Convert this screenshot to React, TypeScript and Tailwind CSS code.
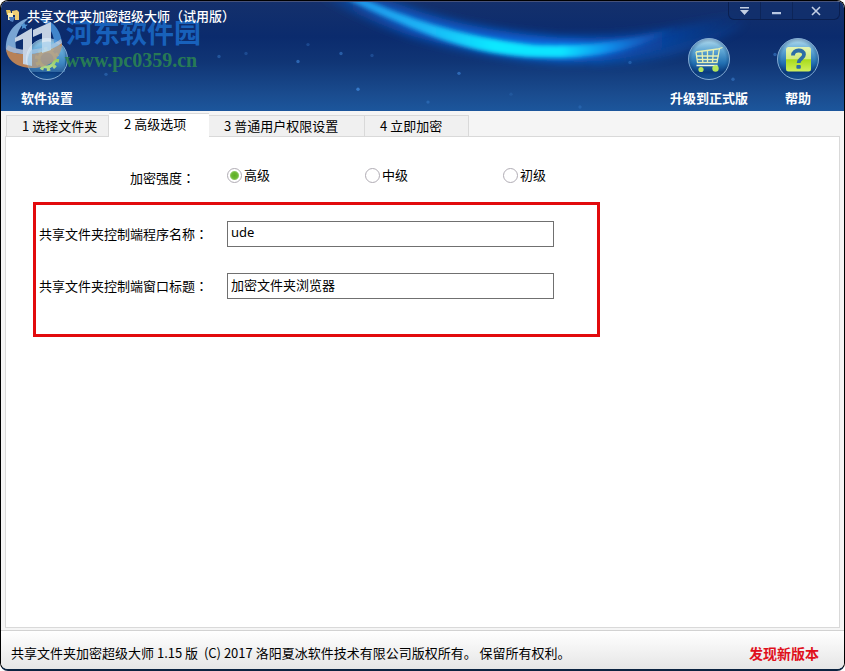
import { useState } from "react";
import type { ReactNode } from "react";

const tabs = [
  { label: "1 选择文件夹", width: "w-[103px]" },
  { label: "2 高级选项", width: "w-[100px]" },
  { label: "3 普通用户权限设置", width: "w-[156px]" },
  { label: "4 立即加密", width: "w-[104px]" },
];

const levels = ["高级", "中级", "初级"];

const stars = [
  [245, 52, 0.3],
  [297, 60, 0.6],
  [307, 43, 0.3],
  [340, 52, 0.5],
  [357, 88, 0.8],
  [371, 54, 0.3],
  [427, 101, 0.4],
  [458, 72, 0.6],
  [510, 93, 0.2],
  [579, 106, 0.3],
  [629, 61, 0.4],
  [732, 78, 0.5],
  [774, 53, 0.5],
  [105, 73, 0.4],
  [218, 55, 0.4],
];

function HeaderBackground() {
  return (
    <svg
      className="absolute inset-0 h-full w-full"
      viewBox="0 0 843 110"
      preserveAspectRatio="none"
      aria-hidden="true"
    >
      <defs>
        <linearGradient id="sky" x1="0" y1="0" x2="0" y2="1">
          <stop offset="0" stopColor="#14306c" />
          <stop offset="0.32" stopColor="#0b2b6d" />
          <stop offset="0.55" stopColor="#103575" />
          <stop offset="0.85" stopColor="#1a4c8f" />
          <stop offset="1" stopColor="#1c569c" />
        </linearGradient>
        <linearGradient id="beam" gradientUnits="userSpaceOnUse" x1="340" y1="0" x2="680" y2="0">
          <stop offset="0" stopColor="#1e8fe8" />
          <stop offset="0.25" stopColor="#1cb6f6" />
          <stop offset="0.45" stopColor="#0ce8ff" />
          <stop offset="0.65" stopColor="#0ce4ff" />
          <stop offset="0.78" stopColor="#129df4" stopOpacity="0.85" />
          <stop offset="0.9" stopColor="#1474dc" stopOpacity="0.35" />
          <stop offset="1" stopColor="#1560c8" stopOpacity="0" />
        </linearGradient>
        <linearGradient id="glow" gradientUnits="userSpaceOnUse" x1="290" y1="0" x2="750" y2="0">
          <stop offset="0" stopColor="#0d4eb0" stopOpacity="0.2" />
          <stop offset="0.25" stopColor="#0c5fd0" stopOpacity="0.8" />
          <stop offset="0.6" stopColor="#0a6be4" />
          <stop offset="0.75" stopColor="#0c56c4" stopOpacity="0.7" />
          <stop offset="1" stopColor="#0c56c4" stopOpacity="0" />
        </linearGradient>
        <filter id="soft" x="-20%" y="-60%" width="140%" height="220%">
          <feGaussianBlur stdDeviation="2.2" />
        </filter>
        <filter id="softer" x="-20%" y="-80%" width="140%" height="260%">
          <feGaussianBlur stdDeviation="5" />
        </filter>
      </defs>
      <rect width="843" height="110" fill="url(#sky)" />
      <path
        d="M320 -6 L376 -6 C440 20 490 30 560 36 C630 38 690 24 750 8 C700 40 640 58 590 60 C520 62 460 48 410 34 C380 24 350 10 320 -6Z"
        fill="url(#glow)"
        filter="url(#softer)"
      />
      <path
        d="M590 58 C650 56 690 38 745 20 C705 48 650 64 590 62Z"
        fill="#1168d8"
        opacity="0.35"
        filter="url(#softer)"
      />
      <path
        d="M340 -6 L364 -3 C410 18 460 34 530 43 C570 46 630 42 680 22 C650 46 600 56 560 56 C500 57 460 46 420 30 C390 18 360 5 340 -6Z"
        fill="url(#beam)"
        filter="url(#soft)"
      />
      {stars.map(([x, y, opacity]) => (
        <circle key={`${x}-${y}`} cx={x} cy={y} r="1.7" fill="#3f86d8" opacity={opacity} />
      ))}
    </svg>
  );
}

function Orb({ id, children }: { id: string; children: ReactNode }) {
  return (
    <svg className="h-11 w-11" viewBox="0 0 44 44" aria-hidden="true">
      <defs>
        <linearGradient id={`${id}-body`} x1="0" y1="0" x2="0" y2="1">
          <stop offset="0" stopColor="#b8dff0" />
          <stop offset="0.3" stopColor="#5fa6d4" />
          <stop offset="0.6" stopColor="#2270b2" />
          <stop offset="0.82" stopColor="#0a3b7e" />
          <stop offset="1" stopColor="#1c5da4" />
        </linearGradient>
        <radialGradient id={`${id}-shade`} cx="0.5" cy="0.5" r="0.5">
          <stop offset="0.8" stopColor="#06295f" stopOpacity="0" />
          <stop offset="1" stopColor="#06295f" stopOpacity="0.35" />
        </radialGradient>
        <linearGradient id={`${id}-lime`} x1="0" y1="0" x2="0" y2="1">
          <stop offset="0" stopColor="#e4f4b4" />
          <stop offset="0.48" stopColor="#d3ec7c" />
          <stop offset="0.52" stopColor="#a9db1c" />
          <stop offset="1" stopColor="#d0f05c" />
        </linearGradient>
      </defs>
      <circle cx="22" cy="22" r="20.5" fill={`url(#${id}-body)`} />
      <circle cx="22" cy="22" r="20.5" fill={`url(#${id}-shade)`} stroke="#83acd4" strokeWidth="1" />
      {children}
    </svg>
  );
}

function GearIcon() {
  return (
    <Orb id="gear">
      <g fill="none" stroke="url(#gear-lime)">
        <circle cx="22" cy="22" r="8" strokeWidth="3" />
        <circle cx="22" cy="22" r="10.6" strokeWidth="3" strokeDasharray="3.4 3.26" />
      </g>
    </Orb>
  );
}

function CartIcon() {
  return (
    <Orb id="cart">
      <g fill="none" stroke="#e6f0b4" strokeWidth="1.3">
        <path d="M9 15 L30.5 12 L35.5 10.5" />
        <path d="M9 15 L10.5 25.5 H30 L32.5 11.5" />
        <path d="M9.5 19 H31.5 M10 22.5 H31 M15 14 L15.8 25.5 M20.5 13.5 V25.5 M26.5 12.5 L25.5 25.5" />
        <path d="M9.5 28.5 H30.5" strokeWidth="1.6" stroke="#f3f6e2" />
      </g>
      <circle cx="14" cy="32.5" r="2.6" fill="#b4e65c" />
      <circle cx="28.5" cy="31.5" r="3.2" fill="#b4e65c" />
    </Orb>
  );
}

function HelpIcon() {
  return (
    <Orb id="help">
      <rect x="10" y="10" width="25" height="24.5" rx="2.5" fill="url(#help-lime)" />
      <path
        d="M17 18.5 C17 12 28 12 28 17.5 C28 21.5 22.8 21.5 22.6 26"
        fill="none"
        stroke="#2d6da6"
        strokeWidth="3.8"
      />
      <rect x="20.4" y="28" width="4.4" height="3.8" rx="1" fill="#2d6da6" />
    </Orb>
  );
}

function ToolbarButton({ icon, label }: { icon: ReactNode; label: string }) {
  return (
    <button type="button" className="flex flex-col items-center gap-[7px] text-white">
      {icon}
      <span className="text-[13px] leading-5 font-bold">{label}</span>
    </button>
  );
}

function FolderIcon() {
  return (
    <svg className="h-4 w-4" viewBox="0 0 16 16" aria-hidden="true">
      <path d="M1 2 H5 L6 4 V7 H2 Z" fill="#e9c65e" />
      <path d="M7 3 L12 2 L14 4 V12 H10 V7 H7 Z" fill="#efcf74" />
      <path d="M3 5 H8 V12 H3 Z" fill="#fbefb8" />
      <path d="M4 9 L10 9 L8 14 L5 13 Z" fill="#4f7fc0" />
    </svg>
  );
}

function Watermark() {
  return (
    <div className="pointer-events-none absolute top-3 left-1 flex" aria-hidden="true">
      <svg className="h-[58px] w-[60px]" viewBox="0 0 60 58">
        <g opacity="0.85">
          <path
            d="M24 4 C9 8 0 20 1 36 C2 39 4 42 7 43 L12 38 C8 27 12 14 24 4Z"
            fill="#8dbbe6"
          />
          <path d="M32 4 C46 4 55 14 57 28 C57 31 56 34 54 36 L49 32 C50 20 44 10 32 4Z" fill="#4b95dc" />
          <path
            d="M1 35 C11 43 38 42 57 29 C57 44 44 54 28 54 C13 54 2 47 1 35Z"
            fill="#d68f52"
          />
          <path d="M1 35 C11 43 38 42 57 29 L56 25 C40 37 15 39 3 31Z" fill="#bccce0" />
          <path d="M10 24 L27 14 V52 L18 50 V25 L10 28Z" fill="#e6eff8" />
          <path d="M28 16 L46 8 V36 L37 39 V19 L28 23Z" fill="#e6eff8" />
          <path d="M19 8 l1 2.5 2.8 .2 -2.1 1.8 .7 2.7 -2.4 -1.5 -2.4 1.5 .7 -2.7 -2.1 -1.8 2.8 -.2Z" fill="#5ca7e6" />
        </g>
        <circle cx="43" cy="48" r="20.5" fill="#6fb2e0" opacity="0.35" />
      </svg>
      <div className="flex flex-col whitespace-nowrap">
        <span className="pl-px font-['Noto_Sans_CJK_SC',sans-serif] text-[27px] leading-9 font-bold text-[#1a69c6]/90">
          河东软件园
        </span>
        <span className="font-['Liberation_Serif',serif] text-xl leading-5 font-bold text-[#2b8451]/90">
          www.pc0359.cn
        </span>
      </div>
    </div>
  );
}

function WindowControls() {
  return (
    <div className="mr-1 flex h-[18px] rounded-b-md border border-t-0 border-[#0a1f50] bg-[#12316d]/60">
      <button type="button" aria-label="菜单" className="grid w-8 place-items-center border-r border-[#0d2558]">
        <svg className="h-2 w-[11px]" viewBox="0 0 11 8" aria-hidden="true">
          <path d="M1 0 H10 V1.4 H1Z M1 3 H10 L5.5 8Z" fill="#c3cfe4" />
        </svg>
      </button>
      <button type="button" aria-label="最小化" className="grid w-8 place-items-center border-r border-[#0d2558]">
        <svg className="h-2 w-[11px]" viewBox="0 0 11 8" aria-hidden="true">
          <path d="M1 5 H10 V7.2 H1Z" fill="#b9c8e2" />
        </svg>
      </button>
      <button type="button" aria-label="关闭" className="grid w-[46px] place-items-center">
        <svg className="h-[10px] w-[10px]" viewBox="0 0 10 10" aria-hidden="true">
          <path d="M1 1 L9 9 M9 1 L1 9" stroke="#c3cfe4" strokeWidth="1.6" />
        </svg>
      </button>
    </div>
  );
}

// The TC face centres the full-width colon in its cell
function Colon() {
  return <span className="font-['Noto_Sans_CJK_TC',sans-serif]">：</span>;
}

function TextField({ id, label, value }: { id: string; label: string; value: string }) {
  return (
    <div className="flex items-center">
      <label htmlFor={id} className="w-[188px] shrink-0 whitespace-nowrap">
        {label}
        <Colon />
      </label>
      <input
        id={id}
        type="text"
        defaultValue={value}
        className="h-[26px] w-[327px] min-w-0 border border-[#707070] bg-white px-[3px] pb-1 font-['Noto_Sans','Noto_Sans_CJK_SC',sans-serif] text-[13px] outline-none"
      />
    </div>
  );
}

export default function App() {
  const [active, setActive] = useState(1);

  return (
    <div className="flex min-h-screen flex-col overflow-hidden rounded-lg border border-black border-b-2 border-b-[#0b2340] bg-[#f5f5f5] font-['Noto_Sans_CJK_SC',sans-serif] text-[13px] leading-5 text-black">
      <header className="relative h-[110px] border-t border-[#46527a]">
        <HeaderBackground />
        <div className="relative z-10 flex items-start justify-between">
          <h1 className="flex items-center gap-[6px] pt-1 pl-1 font-medium text-white">
            <FolderIcon />
            共享文件夹加密超级大师（试用版）
          </h1>
          <WindowControls />
        </div>
        <nav className="relative flex justify-between pt-[11px] pr-6 pl-5">
          <ToolbarButton icon={<GearIcon />} label="软件设置" />
          <div className="flex gap-7">
            <ToolbarButton icon={<CartIcon />} label="升级到正式版" />
            <ToolbarButton icon={<HelpIcon />} label="帮助" />
          </div>
        </nav>
        <Watermark />
      </header>

      <main className="flex flex-1 flex-col px-1 pb-[2px]">
        <div role="tablist" className="flex h-[25px] items-end pl-px">
          {tabs.map((tab, i) => (
            <button
              key={tab.label}
              type="button"
              role="tab"
              aria-selected={active === i}
              onClick={() => setActive(i)}
              className={`${tab.width} border-[#d9d9d9] pl-[15px] text-left whitespace-nowrap ${
                active === i
                  ? "z-10 -mb-px h-6 border-t bg-white pb-1"
                  : "h-[21px] border-t border-r bg-[#f0f0f0] first:border-l"
              }`}
            >
              {tab.label}
            </button>
          ))}
        </div>

        <section role="tabpanel" className="flex-1 border border-[#d9d9d9] bg-white pt-[27px]">
          <div role="radiogroup" aria-labelledby="strength" className="flex h-6 pl-[124px]">
            <span id="strength" className="w-[97px] self-end">
              加密强度
              <Colon />
            </span>
            {levels.map((level, i) => (
              <label key={level} className="flex h-[22px] w-[138px] items-center gap-[2px]">
                <input
                  type="radio"
                  name="strength"
                  defaultChecked={i === 0}
                  className="h-[15px] w-[15px] appearance-none rounded-full border border-[#b0acb4] bg-white checked:bg-[radial-gradient(circle,#5cae22_0,#6cb834_3px,#8cc860_4px,#ffffff_5px)]"
                />
                {level}
              </label>
            ))}
          </div>

          <div className="mt-[14px] ml-[27px] flex w-[567px] max-w-full flex-col gap-[26px] border-3 border-[#e20a0d] pt-4 pb-[35px] pl-[3px]">
            <TextField id="program" label="共享文件夹控制端程序名称" value="ude" />
            <TextField id="window-title" label="共享文件夹控制端窗口标题" value="加密文件夹浏览器" />
          </div>
        </section>
      </main>

      <footer className="flex h-[39px] items-center justify-between border-t border-[#d2d2d2] bg-linear-to-b from-white to-[#e6e6e6] pt-[6px] pr-[25px] pl-[10px]">
        <p className="whitespace-pre">
          共享文件夹加密超级大师 1.15 版  (C) 2017 洛阳夏冰软件技术有限公司版权所有。 保留所有权利。
        </p>
        <a href="#" className="text-sm font-bold text-[#e0101c]">
          发现新版本
        </a>
      </footer>
    </div>
  );
}
